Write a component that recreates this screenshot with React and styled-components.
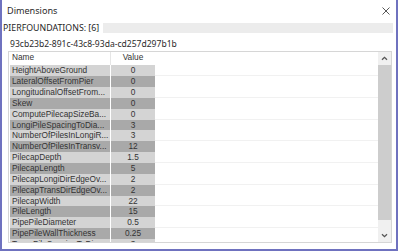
import React from 'react';
import styled, { createGlobalStyle } from 'styled-components';

const GlobalStyle = createGlobalStyle`
  html, body { margin: 0; padding: 0; background: #fff; }
  body { font-family: "Noto Sans", "Liberation Sans", sans-serif; }
`;

const Window = styled.div`
  width: 398px;
  height: 251px;
  box-sizing: border-box;
  border: 2px solid #6f72bf;
  border-top: none;
  background: #fff;
  display: flex;
  flex-direction: column;
`;

const TitleBar = styled.div`
  height: 22.5px;
  flex: none;
  display: flex;
  align-items: center;
  justify-content: space-between;
  padding: 0 6px 0 5px;
  box-sizing: border-box;
`;

const Title = styled.span`
  font-size: 9.1px;
  color: #2b2b2b;
  line-height: 12px;
`;

const CloseButton = styled.span`
  display: flex;
  width: 8px;
  height: 8px;
`;

const TabStrip = styled.div`
  height: 10px;
  flex: none;
  display: flex;
  margin-right: 3px;
`;

const Tab = styled.div`
  width: 100px;
  padding-left: 1px;
  font-size: 8.8px;
  line-height: 10px;
  color: #1e1e1e;
  white-space: nowrap;
  background: #fff;
`;

const TabFiller = styled.div`
  flex: 1;
  background: #ececec;
`;

const GuidRow = styled.div`
  height: 18.5px;
  flex: none;
  box-sizing: border-box;
  padding: 5.5px 0 0 8px;
  font-size: 8.56px;
  line-height: 12px;
  color: #2b2b2b;
  white-space: nowrap;
`;

const Panel = styled.div`
  flex: none;
  height: 192px;
  margin: 0 4px 0 6px;
  box-sizing: border-box;
  border: 1px solid #d6d6d6;
  display: flex;
  overflow: hidden;
`;

const Grid = styled.div`
  flex: 1;
  padding-left: 1px;
  display: flex;
  flex-direction: column;
  overflow: hidden;
  font-family: "Liberation Sans", Arial, sans-serif;
  font-size: 8.3px;
  color: #333;
`;

const Row = styled.div`
  flex: none;
  height: ${p => (p.$header ? '13.3px' : '10.86px')};
  display: grid;
  grid-template-columns: 100px 45px 1fr;
`;

const NameCell = styled.div`
  background: ${p => p.$bg};
  padding-left: 2px;
  line-height: ${p => (p.$header ? '11px' : '10.86px')};
  white-space: nowrap;
  overflow: hidden;
`;

const ValueCell = styled.div`
  background: ${p => p.$bg};
  border-left: 1px solid ${p => (p.$header ? '#e6e6e6' : '#ffffff')};
  text-align: center;
  line-height: ${p => (p.$header ? '11px' : '10.86px')};
  white-space: nowrap;
  overflow: hidden;
`;

const FillerCell = styled.div`
  background: #fff;
  box-sizing: border-box;
  border-bottom: 1px solid ${p => (p.$line ? '#f1f1f1' : 'transparent')};
`;

const Scrollbar = styled.div`
  width: 13px;
  flex: none;
  display: flex;
  flex-direction: column;
  background: #f0f0f0;
`;

const ArrowButton = styled.div`
  height: 13px;
  flex: none;
  display: flex;
  align-items: center;
  justify-content: center;
`;

const Thumb = styled.div`
  height: 155px;
  flex: none;
  background: #cdcdcd;
`;

const Track = styled.div`
  flex: 1;
`;

const Chevron = ({ down }) => (
  <svg width="7" height="5" viewBox="0 0 7 5">
    <polyline
      points={down ? '1,1.2 3.5,3.7 6,1.2' : '1,3.8 3.5,1.3 6,3.8'}
      fill="none"
      stroke="#555"
      strokeWidth="1.3"
    />
  </svg>
);

const rows = [
  ['HeightAboveGround', '0'],
  ['LateralOffsetFromPier', '0'],
  ['LongitudinalOffsetFrom...', '0'],
  ['Skew', '0'],
  ['ComputePilecapSizeBa...', '0'],
  ['LongiPileSpacingToDia...', '3'],
  ['NumberOfPilesInLongiR...', '3'],
  ['NumberOfPilesInTransv...', '12'],
  ['PilecapDepth', '1.5'],
  ['PilecapLength', '5'],
  ['PilecapLongiDirEdgeOv...', '2'],
  ['PilecapTransDirEdgeOv...', '2'],
  ['PilecapWidth', '22'],
  ['PileLength', '15'],
  ['PipePileDiameter', '0.5'],
  ['PipePileWallThickness', '0.25'],
  ['TransPileSpacingToDia...', '3'],
];

export default function App() {
  return (
    <>
      <GlobalStyle />
      <Window>
        <TitleBar>
          <Title>Dimensions</Title>
          <CloseButton>
            <svg width="8" height="8" viewBox="0 0 8 8">
              <path d="M0.5 0.5 L7.5 7.5 M7.5 0.5 L0.5 7.5" stroke="#444" strokeWidth="0.9" />
            </svg>
          </CloseButton>
        </TitleBar>
        <TabStrip>
          <Tab>PIERFOUNDATIONS: [6]</Tab>
          <TabFiller />
        </TabStrip>
        <GuidRow>93cb23b2-891c-43c8-93da-cd257d297b1b</GuidRow>
        <Panel>
          <Grid>
            <Row $header>
              <NameCell $header $bg="#fff">Name</NameCell>
              <ValueCell $header $bg="#fff">Value</ValueCell>
              <FillerCell />
            </Row>
            {rows.map(([name, value], i) => {
              const bg = i % 2 === 0 ? '#d4d4d4' : '#a9a9a9';
              return (
                <Row key={name}>
                  <NameCell $bg={bg}>{name}</NameCell>
                  <ValueCell $bg={bg}>{value}</ValueCell>
                  <FillerCell $line={i % 2 === 0} />
                </Row>
              );
            })}
          </Grid>
          <Scrollbar>
            <ArrowButton><Chevron /></ArrowButton>
            <Thumb />
            <Track />
            <ArrowButton><Chevron down /></ArrowButton>
          </Scrollbar>
        </Panel>
      </Window>
    </>
  );
}
